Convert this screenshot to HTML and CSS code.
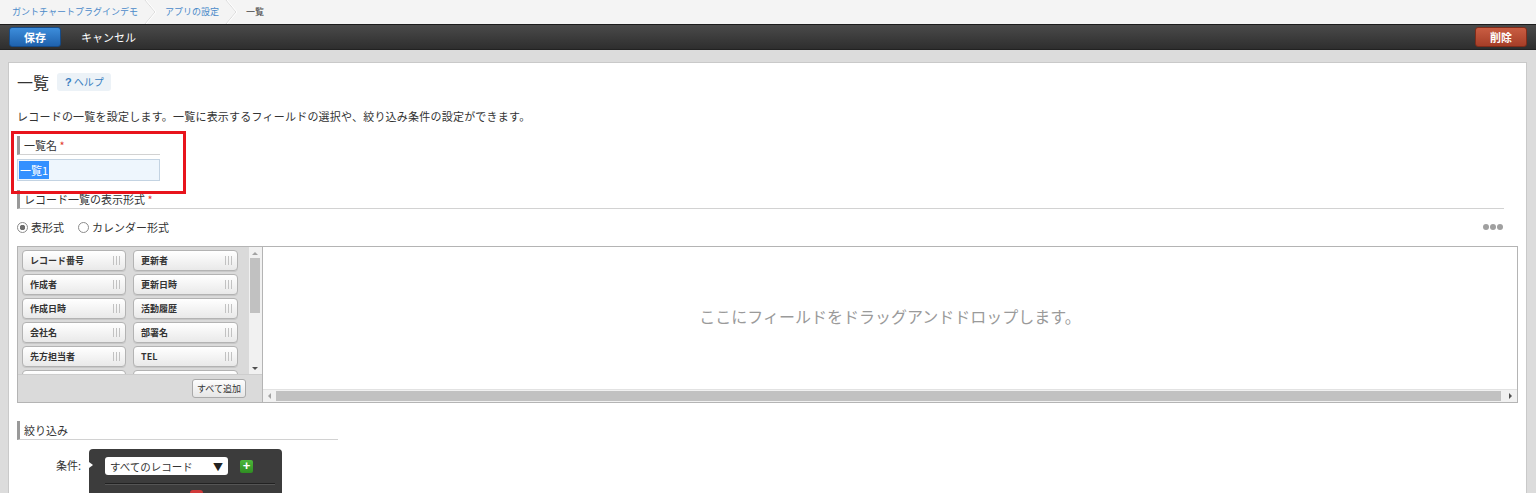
FILE: index.html
```html
<!DOCTYPE html>
<html lang="ja">

<head>
    <meta charset="UTF-8" />
    <title>一覧 - アプリの設定</title>
    <link rel="stylesheet" href="styles.css">
</head>

<body>
    <div class="crumbs">
        <a class="crumb-link">ガントチャートプラグインデモ</a>
        <svg class="crumb-sep" width="14" height="24" viewBox="0 0 14 24"><polyline points="2,0 12,12 2,24" fill="none" stroke="#dcdcdc" stroke-width="1"/><polyline points="3,0 13,12 3,24" fill="none" stroke="#ffffff" stroke-width="1"/></svg>
        <a class="crumb-link">アプリの設定</a>
        <svg class="crumb-sep" width="14" height="24" viewBox="0 0 14 24"><polyline points="2,0 12,12 2,24" fill="none" stroke="#dcdcdc" stroke-width="1"/><polyline points="3,0 13,12 3,24" fill="none" stroke="#ffffff" stroke-width="1"/></svg>
        <span class="crumb-current">一覧</span>
    </div>

    <div class="toolbar">
        <button class="btn-save">保存</button>
        <button class="btn-cancel">キャンセル</button>
        <button class="btn-delete">削除</button>
    </div>

    <div class="page">
        <div class="panel">
            <div class="panel-head">
                <h1 class="panel-title">一覧</h1>
                <span class="help"><b>?</b>ヘルプ</span>
            </div>

            <p class="desc">レコードの一覧を設定します。一覧に表示するフィールドの選択や、絞り込み条件の設定ができます。</p>

            <div class="name-field">
                <div class="label label-name">一覧名 <span class="req">*</span></div>
                <div class="name-input"><span class="selected">一覧1</span></div>
                <div class="highlight"></div>
            </div>

            <div class="label label-wide">レコード一覧の表示形式 <span class="req">*</span></div>

            <div class="view-type">
                <label class="radio"><span class="radio-dot checked"></span>表形式</label>
                <label class="radio"><span class="radio-dot"></span>カレンダー形式</label>
                <span class="more"><i></i><i></i><i></i></span>
            </div>

            <div class="chooser">
                <div class="field-pane">
                    <div class="field-scroll">
                        <div class="field-list">
                            <div class="field-item">レコード番号<span class="grip"></span></div>
                            <div class="field-item">更新者<span class="grip"></span></div>
                            <div class="field-item">作成者<span class="grip"></span></div>
                            <div class="field-item">更新日時<span class="grip"></span></div>
                            <div class="field-item">作成日時<span class="grip"></span></div>
                            <div class="field-item">活動履歴<span class="grip"></span></div>
                            <div class="field-item">会社名<span class="grip"></span></div>
                            <div class="field-item">部署名<span class="grip"></span></div>
                            <div class="field-item">先方担当者<span class="grip"></span></div>
                            <div class="field-item">TEL<span class="grip"></span></div>
                            <div class="field-item">&nbsp;</div>
                            <div class="field-item">&nbsp;</div>
                        </div>
                        <div class="vbar">
                            <span class="arrow-up"></span>
                            <span class="vthumb"></span>
                            <span class="arrow-down"></span>
                        </div>
                    </div>
                    <div class="field-foot">
                        <button class="btn-add-all">すべて追加</button>
                    </div>
                </div>
                <div class="drop-pane">
                    <div class="drop-zone">ここにフィールドをドラッグアンドドロップします。</div>
                    <div class="hbar">
                        <span class="arrow-left"></span>
                        <span class="hthumb"></span>
                        <span class="arrow-right"></span>
                    </div>
                </div>
            </div>

            <div class="label label-filter">絞り込み</div>

            <div class="cond-row">
                <div class="cond-label">条件:</div>
                <div class="cond-box">
                    <div class="cond-top">
                        <div class="cond-select">すべてのレコード<span class="caret">▼</span></div>
                        <span class="btn-plus">+</span>
                    </div>
                    <div class="cond-rule"></div>
                    <div class="cond-next"><span class="btn-minus"></span></div>
                </div>
            </div>
        </div>
    </div>
</body>

</html>
```

FILE: styles.css
```css
* {
    box-sizing: border-box;
}

html,
body {
    margin: 0;
    height: 100%;
    overflow: hidden;
}

body {
    font-family: "Noto Sans CJK JP", "Liberation Sans", sans-serif;
    font-size: 11px;
    color: #333;
    background-color: #dcdcdc;
}

/* breadcrumb */
.crumbs {
    display: flex;
    align-items: center;
    height: 24px;
    padding-left: 12px;
    background-color: #f4f4f4;
    font-size: 9px;
    line-height: 24px;
}

.crumb-link {
    color: #4b8ac9;
}

.crumb-sep {
    margin: 0 8px 0 5px;
}

.crumb-current {
    color: #444;
}

/* toolbar */
.toolbar {
    display: flex;
    align-items: center;
    height: 26px;
    padding: 0 9px;
    background: linear-gradient(#4a4a4a, #2e2e2e);
    border-top: 1px solid #1c1c1c;
    border-bottom: 1px solid #222;
}

.toolbar button {
    font-family: inherit;
    font-size: 11px;
    cursor: pointer;
}

.btn-save {
    width: 52px;
    height: 20px;
    padding: 0;
    color: #fff;
    font-weight: bold;
    background: linear-gradient(#3d8ddb, #1f62ad);
    border: 1px solid #164b87;
    border-radius: 3px;
}

.btn-cancel {
    margin-left: 20px;
    padding: 0;
    color: #fff;
    background: none;
    border: none;
}

.btn-delete {
    margin-left: auto;
    width: 52px;
    height: 20px;
    padding: 0;
    color: #fff;
    font-weight: bold;
    background: linear-gradient(#c95d42, #a63e27);
    border: 1px solid #7f2c1a;
    border-radius: 3px;
}

/* page */
.page {
    padding: 12px 9px 0 8px;
    background-color: #dcdcdc;
}

.panel {
    height: 440px;
    padding: 10px 8px 0 8px;
    background-color: #fff;
    border: 1px solid #c9c9c9;
}

.panel-head {
    display: flex;
    align-items: center;
    height: 18px;
}

.panel-title {
    margin: 0;
    font-size: 16px;
    font-weight: normal;
    line-height: 18px;
    color: #333;
}

.help {
    margin-left: 8px;
    height: 18px;
    padding: 0 7px 0 8px;
    font-size: 10px;
    line-height: 18px;
    color: #3a7fc1;
    background-color: #ecf2f7;
    border-radius: 3px;
}

.help b {
    margin-right: 2px;
    font-family: "Liberation Sans", sans-serif;
    font-size: 11px;
}

.desc {
    margin: 17px 0 0;
    line-height: 16px;
    letter-spacing: 0.22px;
}

/* section labels */
.label {
    height: 19px;
    padding-left: 4px;
    line-height: 18px;
    border-left: 3px solid #999;
    border-bottom: 1px solid #d2d2d2;
}

.req {
    color: #e23b2c;
}

.name-field {
    position: relative;
    margin-top: 12px;
    width: 143px;
}

.name-input {
    height: 22px;
    margin-top: 4px;
    padding: 1px 1px;
    background-color: #eef6fd;
    border: 1px solid #c3d3e2;
}

.selected {
    display: inline-block;
    height: 18px;
    line-height: 18px;
    padding: 0 1px;
    color: #fff;
    background-color: #3390ff;
}

.highlight {
    position: absolute;
    left: -6px;
    top: -5px;
    width: 175px;
    height: 63px;
    border: 3px solid #e8141c;
}

.label-wide {
    margin-top: 9px;
    margin-right: 14px;
}

/* view type */
.view-type {
    display: flex;
    align-items: center;
    height: 14px;
    margin-top: 11px;
    margin-right: 14px;
}

.radio {
    display: flex;
    align-items: center;
    margin-right: 14px;
    line-height: 14px;
}

.radio-dot {
    width: 11px;
    height: 11px;
    margin-right: 3px;
    border: 1px solid #8c8c8c;
    border-radius: 50%;
    background-color: #fff;
}

.radio-dot.checked {
    background: radial-gradient(circle, #6e6e6e 0, #6e6e6e 2.5px, #fff 3px);
}

.more {
    display: flex;
    gap: 1px;
    margin-left: auto;
    margin-right: 1px;
}

.more i {
    width: 6px;
    height: 6px;
    border-radius: 50%;
    background-color: #a0a0a0;
}

/* field chooser */
.chooser {
    display: flex;
    height: 157px;
    margin-top: 12px;
    border: 1px solid #b4b4b4;
}

.field-pane {
    display: flex;
    flex-direction: column;
    width: 245px;
    border-right: 1px solid #b4b4b4;
    background-color: #dadada;
}

.field-scroll {
    display: flex;
    height: 127px;
    overflow: hidden;
}

.field-list {
    display: grid;
    grid-template-columns: 104px 105px;
    grid-auto-rows: 21px;
    column-gap: 7px;
    row-gap: 3px;
    align-content: start;
    width: 231px;
    padding: 3px 0 0 4px;
}

.field-item {
    display: flex;
    align-items: center;
    justify-content: space-between;
    padding: 0 5px 0 7px;
    font-size: 9px;
    font-weight: bold;
    color: #333;
    background: linear-gradient(#ffffff, #e9e9e9);
    border: 1px solid #b3b3b3;
    border-radius: 4px;
    box-shadow: 0 1px 0 #c8c8c8;
}

.grip {
    width: 7px;
    height: 9px;
    background: repeating-linear-gradient(90deg, #c2c2c2 0, #c2c2c2 1px, transparent 1px, transparent 3px);
}

.vbar {
    position: relative;
    width: 13px;
    background-color: #f1f1f1;
}

.vthumb {
    position: absolute;
    left: 1px;
    top: 11px;
    width: 10px;
    height: 55px;
    background-color: #c1c1c1;
}

.arrow-up,
.arrow-down {
    position: absolute;
    left: 3px;
    width: 0;
    height: 0;
    border-left: 3px solid transparent;
    border-right: 3px solid transparent;
}

.arrow-up {
    top: 5px;
    border-bottom: 3px solid #a3a3a3;
}

.arrow-down {
    bottom: 4px;
    border-top: 3px solid #505050;
}

.field-foot {
    display: flex;
    justify-content: flex-end;
    align-items: center;
    height: 28px;
    padding-right: 16px;
    border-top: 1px solid #cdcdcd;
}

.btn-add-all {
    height: 19px;
    padding: 0 4px;
    font-family: inherit;
    font-size: 9px;
    color: #333;
    background: linear-gradient(#fdfdfd, #e6e6e6);
    border: 1px solid #aaa;
    border-radius: 3px;
}

.drop-pane {
    display: flex;
    flex-direction: column;
    flex: 1;
}

.drop-zone {
    display: flex;
    flex: 1;
    align-items: center;
    justify-content: center;
    padding-bottom: 5px;
    font-size: 16px;
    color: #9a9a9a;
    background-color: #fff;
}

.hbar {
    position: relative;
    height: 13px;
    background-color: #f1f1f1;
    border-top: 1px solid #e2e2e2;
}

.hthumb {
    position: absolute;
    left: 13px;
    right: 16px;
    top: 1px;
    height: 10px;
    background-color: #c1c1c1;
}

.arrow-left,
.arrow-right {
    position: absolute;
    top: 3px;
    width: 0;
    height: 0;
    border-top: 3px solid transparent;
    border-bottom: 3px solid transparent;
}

.arrow-left {
    left: 5px;
    border-right: 3px solid #a3a3a3;
}

.arrow-right {
    right: 5px;
    border-left: 3px solid #505050;
}

/* filter */
.label-filter {
    width: 321px;
    margin-top: 18px;
}

.cond-row {
    display: flex;
    margin-top: 9px;
}

.cond-label {
    width: 72px;
    padding: 8px 8px 0 0;
    text-align: right;
    line-height: 16px;
}

.cond-box {
    position: relative;
    width: 193px;
    height: 60px;
    padding: 8px 7px 0 16px;
    background-color: #3c3c3c;
    border-radius: 4px;
}

.cond-box::before {
    content: "";
    position: absolute;
    left: 0;
    top: 13px;
    border-top: 3px solid transparent;
    border-bottom: 3px solid transparent;
    border-left: 4px solid #fff;
}

.cond-top {
    display: flex;
    align-items: center;
}

.cond-select {
    display: flex;
    justify-content: space-between;
    align-items: center;
    width: 123px;
    height: 18px;
    padding: 0 5px 0 5px;
    font-size: 10.5px;
    color: #333;
    background-color: #fff;
    border-radius: 3px;
}

.caret {
    font-size: 10px;
    color: #222;
}

.btn-plus {
    width: 13px;
    height: 13px;
    margin-left: 12px;
    font-family: "Liberation Sans", sans-serif;
    font-size: 13px;
    font-weight: bold;
    line-height: 12px;
    text-align: center;
    color: #fff;
    background: linear-gradient(#4cb83a, #2f8d22);
    border-radius: 2px;
}

.cond-rule {
    height: 2px;
    margin-top: 8px;
    border-top: 1px solid #222;
    border-bottom: 1px solid #555;
}

.cond-next {
    padding: 5px 0 0 85px;
}

.btn-minus {
    display: block;
    width: 13px;
    height: 13px;
    background-color: #d03a3a;
    border-radius: 3px;
}
```
